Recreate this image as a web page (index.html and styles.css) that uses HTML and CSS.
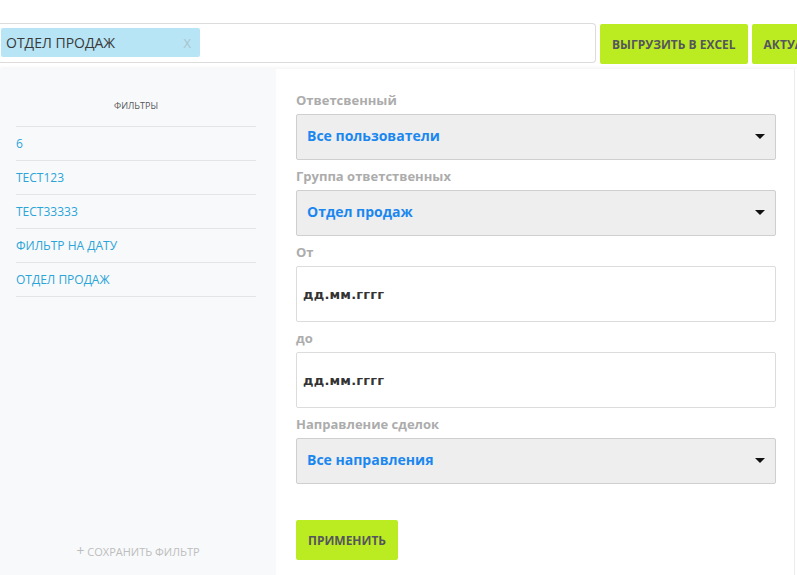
FILE: index.html
```html
<!DOCTYPE html>
<html lang="ru">
<head>
<meta charset="utf-8">
<title>Фильтры</title>
<link rel="stylesheet" href="styles.css">
</head>
<body>
<div class="page">
  <div class="topbar">
    <div class="search">
      <span class="tag"><span class="tag-text">ОТДЕЛ ПРОДАЖ</span><span class="tag-x">X</span></span>
    </div>
    <button class="btn btn-top">ВЫГРУЗИТЬ В EXCEL</button>
    <button class="btn btn-top">АКТУАЛИЗИРОВАТЬ</button>
  </div>
  <div class="main">
    <aside class="sidebar">
      <div class="side-title">ФИЛЬТРЫ</div>
      <ul class="filter-list">
        <li>6</li>
        <li>ТЕСТ123</li>
        <li>ТЕСТ33333</li>
        <li>ФИЛЬТР НА ДАТУ</li>
        <li>ОТДЕЛ ПРОДАЖ</li>
      </ul>
      <div class="save"><span class="plus">+</span> СОХРАНИТЬ ФИЛЬТР</div>
    </aside>
    <section class="panel">
      <div class="field">
        <div class="label">Ответсвенный</div>
        <div class="select"><span>Все пользователи</span><i class="caret"></i></div>
      </div>
      <div class="field">
        <div class="label">Группа ответственных</div>
        <div class="select"><span>Отдел продаж</span><i class="caret"></i></div>
      </div>
      <div class="field">
        <div class="label">От</div>
        <div class="date">дд.мм.гггг</div>
      </div>
      <div class="field">
        <div class="label">до</div>
        <div class="date">дд.мм.гггг</div>
      </div>
      <div class="field">
        <div class="label">Направление сделок</div>
        <div class="select"><span>Все направления</span><i class="caret"></i></div>
      </div>
      <button class="btn btn-apply">ПРИМЕНИТЬ</button>
    </section>
  </div>
</div>
</body>
</html>
```

FILE: styles.css
```css
* { box-sizing: border-box; }
html, body { margin: 0; padding: 0; overflow: hidden; }
body {
  font-family: "Open Sans", "Liberation Sans", sans-serif;
  background: #fff;
  width: 797px;
  height: 575px;
}
.page { width: 797px; height: 575px; display: flex; flex-direction: column; overflow: hidden; }

.topbar {
  display: flex;
  align-items: flex-start;
  padding-top: 23px;
  gap: 4px;
  white-space: nowrap;
}
.search {
  width: 596px;
  height: 40px;
  flex: none;
  border: 1px solid #dcdcdc;
  border-left: none;
  border-radius: 0 4px 4px 0;
  padding: 4px 0 0 1px;
}
.tag {
  display: flex;
  align-items: center;
  justify-content: space-between;
  width: 199px;
  height: 29px;
  background: #b7e5f5;
  border-radius: 2px;
  padding: 0 9px 0 5px;
}
.tag-text { font-size: 14px; color: #3a3a3a; }
.tag-x { font-size: 13px; color: #a9c4cc; }

.btn {
  border: none;
  background: #bbec22;
  color: #55555d;
  font-family: "Open Sans", "Liberation Sans", sans-serif;
  font-weight: 700;
  font-size: 12px;
  border-radius: 2px;
  padding: 0 12px;
  height: 40px;
  cursor: pointer;
}
.btn-top { flex: none; margin-top: 1px; }

.main {
  flex: 1;
  display: flex;
  margin-top: 5px;
  box-shadow: 0 -2px 3px rgba(0,0,0,0.04);
}
.sidebar {
  width: 276px;
  flex: none;
  background: #f8f9fb;
  display: flex;
  flex-direction: column;
  padding: 0 20px 16px 16px;
}
.side-title {
  text-align: center;
  font-size: 9px;
  color: #555;
  height: 58px;
  line-height: 14px;
  padding-top: 30px;
  border-bottom: 1px solid #e3e5e8;
}
.filter-list { list-style: none; margin: 0; padding: 0; }
.filter-list li {
  height: 34px;
  line-height: 33px;
  font-size: 12px;
  color: #2ba5d8;
  border-bottom: 1px solid #e3e5e8;
}
.save {
  margin-top: auto;
  text-align: center;
  font-size: 11px;
  color: #bdbdbd;
  padding-left: 4px;
}
.plus { font-size: 14px; line-height: 11px; }

.panel {
  width: 519px;
  flex: none;
  border-right: 1px solid #ececec;
  padding: 22px 18px 0 20px;
  display: flex;
  flex-direction: column;
}
.field { margin-bottom: 7px; }
.label {
  font-size: 13px;
  font-weight: 700;
  color: #acacac;
  line-height: 18px;
  margin-bottom: 5px;
}
.select {
  height: 46px;
  background: #eeeeee;
  border: 1px solid #cfcfcf;
  border-radius: 2px;
  display: flex;
  align-items: center;
  justify-content: space-between;
  padding: 0 10px 3px 10px;
  font-size: 14px;
  font-weight: 700;
  color: #1a87f0;
}
.caret {
  width: 0; height: 0;
  border-left: 5px solid transparent;
  border-right: 5px solid transparent;
  border-top: 5px solid #111;
  margin-top: 2px;
}
.date {
  height: 56px;
  border: 1px solid #dcdcdc;
  border-radius: 2px;
  display: flex;
  align-items: center;
  padding-left: 6px;
  font-family: "DejaVu Sans", "Open Sans", sans-serif;
  font-size: 13px;
  font-weight: 700;
  letter-spacing: 0.2px;
  color: #333;
}
.btn-apply {
  align-self: flex-start;
  margin-top: 29px;
  width: 102px;
  padding: 0;
}
```
